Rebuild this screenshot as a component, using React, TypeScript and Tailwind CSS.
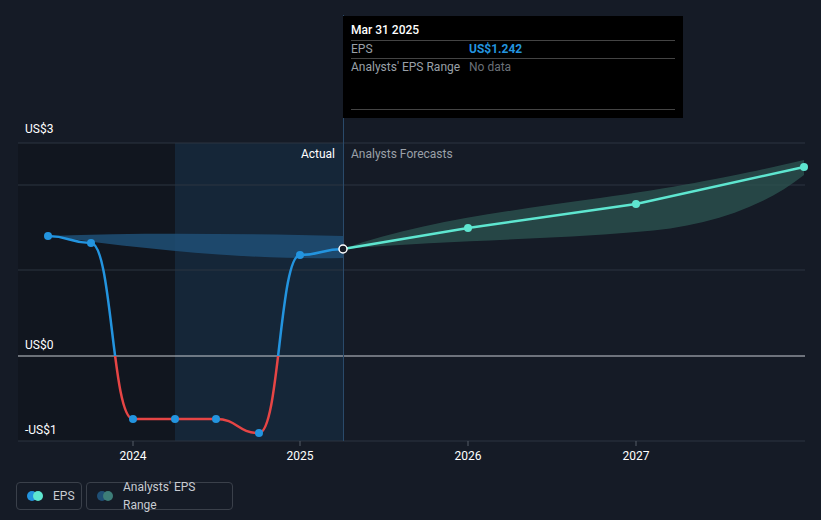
const pts: [number, number][] = [
  [48, 236], [91, 243], [133, 419], [175, 419], [216, 419], [259, 433], [300, 255], [343, 249],
]
const fc: [number, number][] = [[343, 249], [468, 228], [636, 204], [804, 167]]

function smooth(p: [number, number][]) {
  let d = `M${p[0][0]},${p[0][1]}`
  for (let i = 1; i < p.length; i++) {
    const [x0, y0] = p[i - 1]
    const [x1, y1] = p[i]
    const mx = (x0 + x1) / 2
    d += ` C${mx},${y0} ${mx},${y1} ${x1},${y1}`
  }
  return d
}

const font = { fontFamily: 'Roboto, "Liberation Sans", sans-serif' }

export default function App() {
  const eps = smooth(pts)
  return (
    <div className="w-[821px] h-[520px] bg-[#151b26] relative overflow-hidden" style={font}>
      <svg width="821" height="470" className="block">
        <defs>
          <clipPath id="above"><rect x="0" y="0" width="821" height="356" /></clipPath>
          <clipPath id="below"><rect x="0" y="356" width="821" height="120" /></clipPath>
        </defs>
        <rect x="18" y="143" width="157" height="298" fill="#11161f" />
        <rect x="175" y="143" width="168" height="298" fill="#152638" />
        {[143, 185, 270, 441].map((y) => (
          <line key={y} x1="18" x2="805" y1={y} y2={y} stroke="#2d3440" strokeWidth="1" />
        ))}
        <line x1="18" x2="805" y1="356" y2="356" stroke="#c8ccd2" strokeWidth="1" />
        <line x1="343.5" x2="343.5" y1="15" y2="441" stroke="#2a4a6a" strokeWidth="1" />
        {/* past analyst range */}
        <path d="M48,236 C150,232 250,234 343,236 L343,258 C250,260 150,250 48,236 Z" fill="#1f4f75" opacity="0.85" />
        {/* forecast range */}
        <path d="M343,249 C420,222 500,212 600,198 C700,184 760,170 804,160 L804,175 C760,210 700,228 636,232 C540,240 450,240 343,249 Z" fill="#2c5552" opacity="0.75" />
        <path d={eps} fill="none" stroke="#2394df" strokeWidth="2.5" clipPath="url(#above)" />
        <path d={eps} fill="none" stroke="#e64545" strokeWidth="2.5" clipPath="url(#below)" />
        <polyline points={fc.map((p) => p.join(',')).join(' ')} fill="none" stroke="#5ee6d0" strokeWidth="2.5" />
        {pts.slice(0, -1).map(([x, y]) => (
          <circle key={x} cx={x} cy={y} r="4" fill="#2394df" />
        ))}
        {fc.slice(1).map(([x, y]) => (
          <circle key={x} cx={x} cy={y} r="4" fill="#5ee6d0" />
        ))}
        <circle cx="343" cy="249" r="4" fill="#151b26" stroke="#fff" strokeWidth="1.5" />
        <text x="25" y="133" fill="#fff" fontSize="12">US$3</text>
        <text x="25" y="349" fill="#fff" fontSize="12">US$0</text>
        <text x="25" y="434" fill="#fff" fontSize="12">-US$1</text>
        <text x="335" y="158" fill="#fff" fontSize="12" textAnchor="end">Actual</text>
        <text x="351" y="158" fill="#9aa0a8" fontSize="12">Analysts Forecasts</text>
        {[[133, '2024'], [300, '2025'], [468, '2026'], [636, '2027']].map(([x, t]) => (
          <g key={t}>
            <line x1={x} x2={x} y1="441" y2="446" stroke="#555c66" />
            <text x={x} y="460" fill="#fff" fontSize="12" textAnchor="middle">{t}</text>
          </g>
        ))}
      </svg>
      <div className="absolute left-[343px] top-[16px] w-[340px] h-[102px] bg-black px-2 pt-[6px] text-[12px] leading-[17px]">
        <div className="text-white font-medium pb-[1px] border-b border-[#444]">Mar 31 2025</div>
        <div className="flex border-b border-[#444]">
          <span className="w-[118px] text-[#9aa0a8]">EPS</span>
          <span className="text-[#2394df] font-bold">US$1.242</span>
        </div>
        <div className="flex h-[51px] border-b border-[#444]">
          <span className="w-[118px] text-[#9aa0a8]">Analysts' EPS Range</span>
          <span className="text-[#6b7078]">No data</span>
        </div>
      </div>
      <div className="absolute left-[16px] top-[482px] flex gap-[4px] text-[12px] text-[#c8ccd2]">
        <div className="flex items-center gap-2.5 h-[28px] w-[66px] px-2.5 border border-[#3a404a] rounded">
          <span className="flex"><span className="w-2.5 h-2.5 rounded-full bg-[#2394df]" /><span className="w-2.5 h-2.5 rounded-full bg-[#5ee6d0] -ml-1" /></span>
          EPS
        </div>
        <div className="flex items-center gap-2.5 h-[28px] w-[147px] px-2.5 border border-[#3a404a] rounded">
          <span className="flex"><span className="w-2.5 h-2.5 rounded-full bg-[#1f4f75]" /><span className="w-2.5 h-2.5 rounded-full bg-[#3d7d78] -ml-1" /></span>
          Analysts' EPS Range
        </div>
      </div>
    </div>
  )
}
